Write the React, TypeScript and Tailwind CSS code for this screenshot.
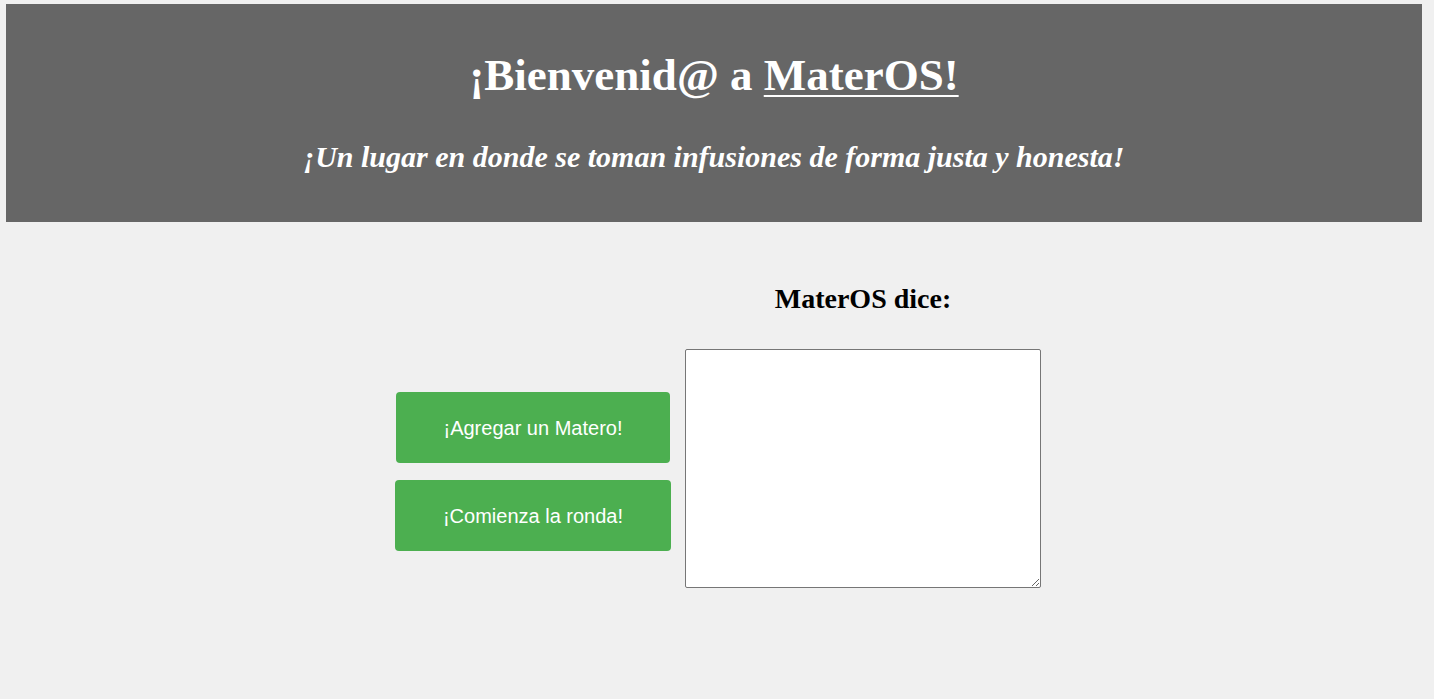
export default function App() {
  return (
    <div className="min-h-[699px] w-full bg-[#f0f0f0] pt-[4px]" style={{ fontFamily: '"Liberation Serif", "Times New Roman", serif' }}>
      <header className="ml-[6px] flex h-[218px] w-[1416px] flex-col items-center bg-[#666666] text-white">
        <h1 className="mt-[45px] text-[45px] font-bold leading-[52px]">
          ¡Bienvenid@ a <span className="underline decoration-[2px] underline-offset-[5px]">MaterOS!</span>
        </h1>
        <h2 className="mt-[38px] text-[30px] font-bold italic leading-[36px]">
          ¡Un lugar en donde se toman infusiones de forma justa y honesta!
        </h2>
      </header>
      <main className="mt-[59px] flex justify-center pl-[2px]">
        <div className="mr-[14px] flex flex-col items-center gap-[17px] pt-[111px]" style={{ fontFamily: '"Liberation Sans", Arial, sans-serif' }}>
          <button className="h-[71px] w-[274px] rounded-[4px] bg-[#4CAF50] text-[20px] text-white">¡Agregar un Matero!</button>
          <button className="h-[71px] w-[276px] rounded-[4px] bg-[#4CAF50] text-[20px] text-white">¡Comienza la ronda!</button>
        </div>
        <div className="flex flex-col items-center">
          <h3 className="text-[28px] font-bold leading-[36px] text-black">MaterOS dice:</h3>
          <textarea className="mt-[32px] h-[239px] w-[356px] rounded-[2px] border border-[#767676] bg-white" />
        </div>
      </main>
    </div>
  );
}
